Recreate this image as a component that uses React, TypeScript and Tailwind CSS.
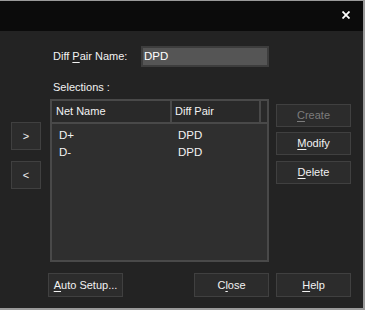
import React from "react"

const font = { fontFamily: '"Liberation Sans", Arial, sans-serif' }

const U = ({ children }: { children: React.ReactNode }) => (
  <span className="underline underline-offset-[2px]">{children}</span>
)

const Btn = ({
  children,
  className = "",
  disabled = false,
}: {
  children: React.ReactNode
  className?: string
  disabled?: boolean
}) => (
  <button
    className={`flex items-center justify-center border border-[#404040] bg-[#2c2c2c] text-[11px] ${
      disabled ? "text-[#7c7c7c]" : "text-[#f2f2f2]"
    } ${className}`}
  >
    {children}
  </button>
)

const rows = [
  { net: "D+", pair: "DPD" },
  { net: "D-", pair: "DPD" },
]

export default function App() {
  return (
    <div
      style={font}
      className="flex h-[310px] w-[365px] flex-col border-t border-r-2 border-b-2 border-[#9a9a9a] bg-[#232323] text-[11px] text-[#f2f2f2]"
    >
      {/* title bar */}
      <div className="flex h-[30px] items-center justify-end bg-[#0b0b0b] pr-[13px]">
        <svg width="8" height="8" viewBox="0 0 8 8" className="mb-[2px]">
          <path d="M0.5 0.5 L7.5 7.5 M7.5 0.5 L0.5 7.5" stroke="#ffffff" strokeWidth="1.8" />
        </svg>
      </div>

      <div className="flex flex-1">
        {/* left arrows */}
        <div className="flex w-[50px] flex-col pl-[11px]">
          <Btn className="mt-[91px] h-[28px] w-[30px]">&gt;</Btn>
          <Btn className="mt-[11px] h-[28px] w-[30px]">&lt;</Btn>
        </div>

        {/* center */}
        <div className="flex w-[219px] flex-col">
          <div className="mt-[15px] flex h-[21px] items-center">
            <span className="ml-[3px] w-[88px]">
              Diff <U>P</U>air Name:
            </span>
            <div className="flex h-[21px] flex-1 items-center border-2 border-[#3d3d3d] bg-[#555555] pl-[1px] text-[11.5px] text-white">
              DPD
            </div>
          </div>
          <div className="mt-[14px] ml-[3px] h-[13px] leading-[13px]">Selections :</div>
          <div className="mt-[5px] flex h-[163px] flex-col border-2 border-[#494949] bg-[#2f2f2f]">
            <div className="flex h-[23px] border-b-2 border-[#494949] bg-[#292929]">
              <div className="flex w-[120px] items-center border-r-2 border-[#494949] pl-[4px]">
                Net Name
              </div>
              <div className="flex w-[89px] items-center border-r-2 border-[#494949] pl-[3px]">
                Diff Pair
              </div>
            </div>
            <div className="pt-[3px]">
              {rows.map((r) => (
                <div key={r.net} className="flex h-[17px] items-center text-[11.5px]">
                  <span className="w-[126px] pl-[7px]">{r.net}</span>
                  <span>{r.pair}</span>
                </div>
              ))}
            </div>
          </div>
          <div className="mt-[11px] flex">
            <Btn className="-ml-[2px] h-[24px] w-[75px]">
              <U>A</U>uto Setup...
            </Btn>
            <Btn className="ml-auto h-[24px] w-[75px]">
              C<U>l</U>ose
            </Btn>
          </div>
        </div>

        {/* right buttons */}
        <div className="ml-[7px] flex w-[75px] flex-col">
          <Btn disabled className="mt-[73px] h-[23px] w-[75px]">
            <U>C</U>reate
          </Btn>
          <Btn className="mt-[5px] h-[23px] w-[75px]">
            <U>M</U>odify
          </Btn>
          <Btn className="mt-[6px] h-[23px] w-[75px]">
            <U>D</U>elete
          </Btn>
          <Btn className="mt-[89px] h-[24px] w-[75px]">
            <U>H</U>elp
          </Btn>
        </div>
      </div>
    </div>
  )
}
